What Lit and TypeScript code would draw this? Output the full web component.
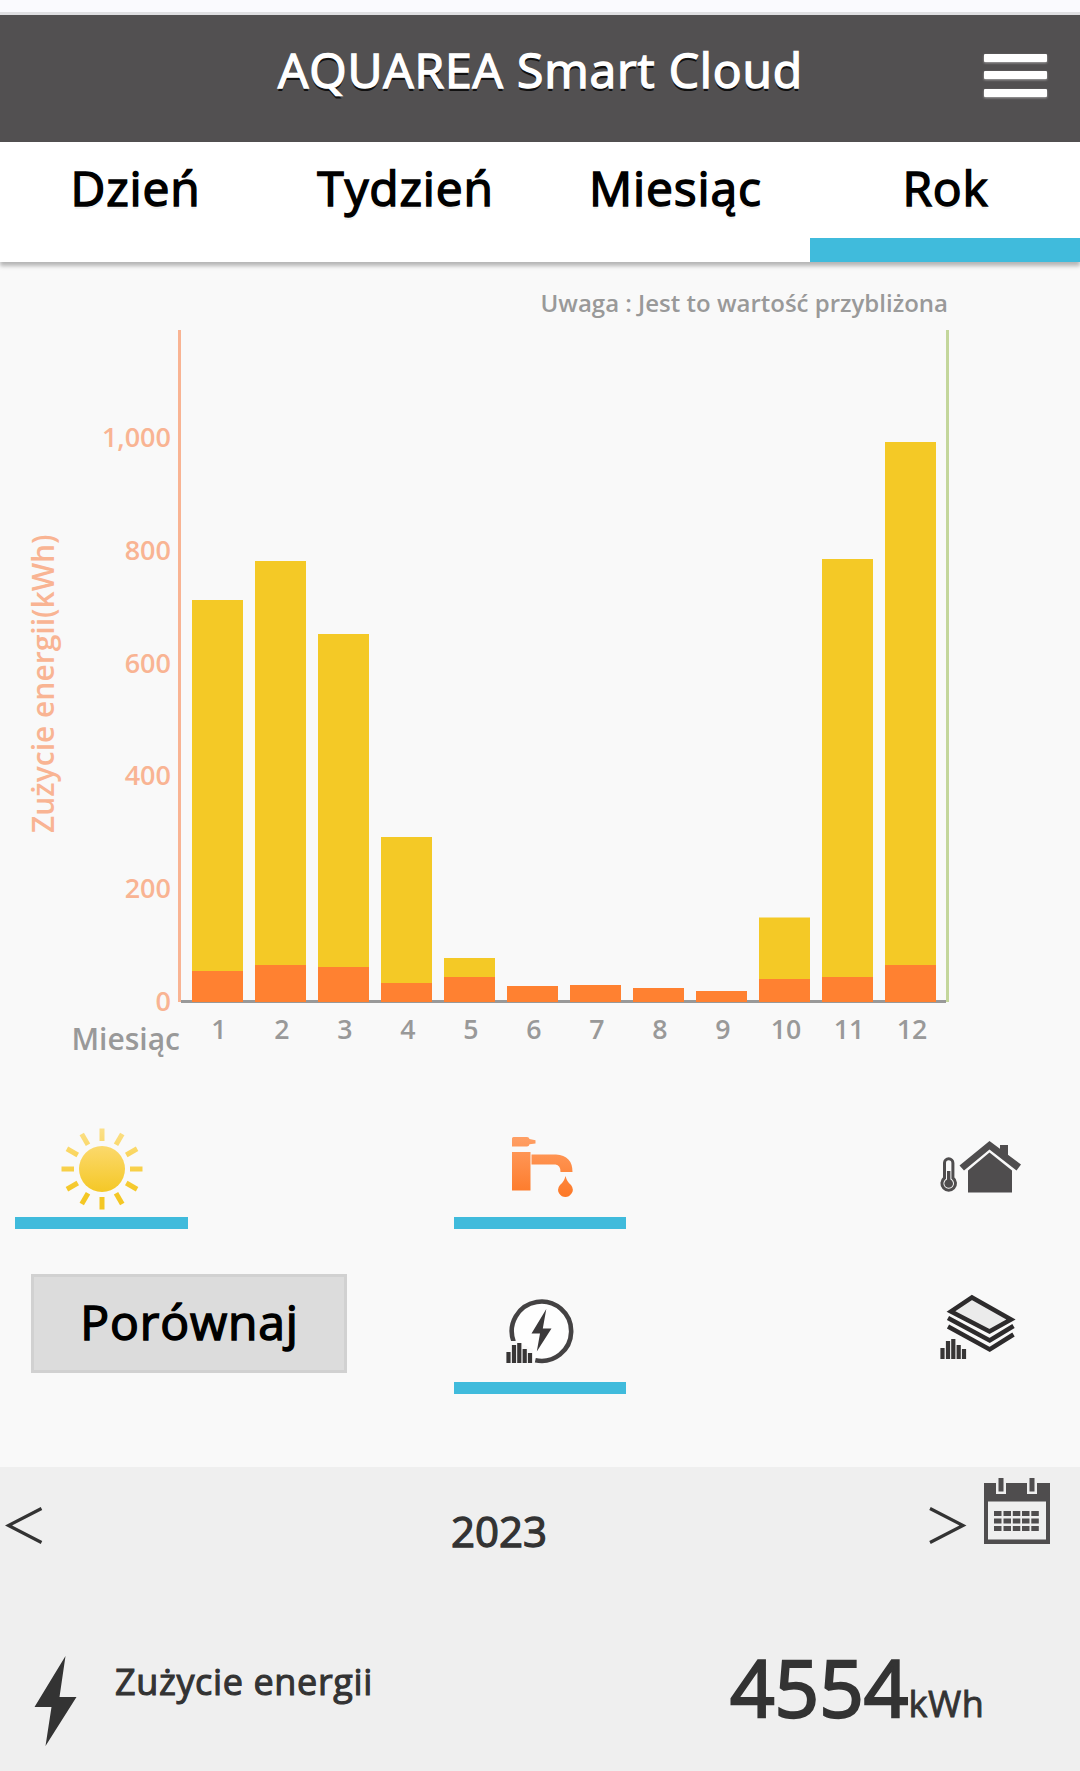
import { LitElement, html, css, svg } from "lit";

const BASE_Y = 1002;
const UNIT = 0.564;

interface Month { n: number; top: number; tank: number }
const MONTHS: Month[] = [
  { n: 1, top: 600, tank: 971 },
  { n: 2, top: 561, tank: 965 },
  { n: 3, top: 634, tank: 967 },
  { n: 4, top: 837, tank: 983 },
  { n: 5, top: 958, tank: 977 },
  { n: 6, top: 986, tank: 986 },
  { n: 7, top: 985, tank: 985 },
  { n: 8, top: 988, tank: 988 },
  { n: 9, top: 991, tank: 991 },
  { n: 10, top: 917.5, tank: 979 },
  { n: 11, top: 559, tank: 977 },
  { n: 12, top: 442, tank: 965 },
];
const TICKS: [string, number][] = [["1,000", 1000], ["800", 800], ["600", 600], ["400", 400], ["200", 200], ["0", 0]];

const sunIcon = html`<svg width="84" height="84" viewBox="-42 -42 84 84">
  <defs><linearGradient id="sun" gradientUnits="userSpaceOnUse" x1="0" y1="-41" x2="0" y2="41">
    <stop offset="0" stop-color="#fbe08a"></stop><stop offset=".35" stop-color="#fad55c"></stop><stop offset=".8" stop-color="#f4c724"></stop></linearGradient></defs>
  <circle r="23" fill="url(#sun)"></circle>
  <g fill="none" stroke="url(#sun)" stroke-width="5">
    ${Array.from({ length: 12 }, (_, i) => {
      const a = (i * Math.PI) / 6 + 0.0001, c = Math.cos(a), s = Math.sin(a);
      return svg`<path d="M${28 * c} ${28 * s}L${40.5 * c} ${40.5 * s}"></path>`;
    })}
  </g></svg>`;

const tapIcon = html`<svg width="64" height="64" viewBox="0 0 64 64">
  <defs><linearGradient id="tap" gradientUnits="userSpaceOnUse" x1="0" y1="0" x2="0" y2="62">
    <stop offset="0" stop-color="#ffa066"></stop><stop offset="1" stop-color="#fd7826"></stop></linearGradient></defs>
  <g fill="url(#tap)">
    <path d="M3 2.500Q3 1 4.500 1H18q2 0 2.500 2l6 1.300v3.200l-6 .8Q20 10.500 18 10.500H3z"></path>
    <path d="M3 16h18.500v38.500H3z"></path>
    <path d="M22.500 18.500H47Q63.500 19.500 63.500 36H51.500Q51.500 29 46.500 28.500H22.500z"></path>
    <path d="M56.500 40Q58 46 62 49Q65.500 53.500 62.500 57.500Q60 61 56.500 61Q52.500 61 50.200 57.500Q47.500 53 51 49Q55 46 56.500 40z"></path>
  </g></svg>`;

const houseIcon = html`<svg width="82" height="56" viewBox="0 0 82 56">
  <g fill="#4f4d4e">
    <path d="M50.500 1 82 24.500 77.500 30.500 50.500 9.500 25 30.500 20.500 25.500z"></path>
    <path d="M61 5h8v13l-8-6z"></path>
    <path d="M50.500 12.500 73 30.500v22H29V30.500z"></path>
  </g>
  <path d="M5.500 38V23a4.200 4.200 0 0 1 8.400 0V38A6.800 6.800 0 1 1 5.500 38z" fill="none" stroke="#4f4d4e" stroke-width="3"></path>
  <circle cx="9.700" cy="43.500" r="4.300" fill="#4f4d4e"></circle>
  <path d="M9.700 31v12" stroke="#4f4d4e" stroke-width="3.400"></path>
</svg>`;

const miniBars = svg`<path d="M2.500 65V54M8 65V47M13.300 65V45M18.700 65V51M24 65V55" fill="none" stroke="#383636" stroke-width="4.200"></path>`;

const energyIcon = html`<svg width="70" height="66" viewBox="0 0 70 66">
  <circle cx="36.300" cy="33.500" r="28.500" fill="#fefefe"></circle>
  <path d="M7.600 43.500A29.700 29.700 0 1 1 29.300 62.300" fill="none" stroke="#444243" stroke-width="4.600"></path>
  <path d="M0 43h9l18 8v15H0z" fill="#f9f9f9"></path>
  <path d="M40.300 11 36.800 30.500H45.500L30.800 53.500 34 35.500H25.500z" fill="#3b393a"></path>
  ${miniBars}
</svg>`;

const stackIcon = html`<svg width="76" height="66" viewBox="0 0 76 66">
  <path d="M32 3.500 71 25.500 49.500 37.500 11 17.500z" fill="#ebebeb" stroke="#2d2b2c" stroke-width="4.500"></path>
  <path d="M8 24 49.700 46.500 73.500 32M8 32.500 49.700 55.500 73.500 40.500" fill="none" stroke="#2d2b2c" stroke-width="4.500"></path>
  ${miniBars}
</svg>`;

const calendarIcon = html`<svg width="66" height="66" viewBox="0 0 66 66">
  <path fill-rule="evenodd" fill="#4f4d4e" d="M0 5H66V66H0zM4 23.500V61.500H62V23.500z"></path>
  <path d="M12 0h10v16H12zM43 0h10v16H43z" fill="#efefef"></path>
  <path d="M14.500 0h5v13.500h-5zM45.500 0h5v13.500h-5z" fill="#4f4d4e"></path>
  <g fill="#4f4d4e">${[33, 40.5, 48].map((y) => [10, 19.5, 28.8, 38, 47.3].map((x) => svg`<rect x=${x} y=${y} width="7.500" height="5"></rect>`))}</g>
</svg>`;

class AppRoot extends LitElement {
  static styles = css`
    :host { display: block; width: 1080px; height: 1771px; overflow: hidden; background: #f9f9f9;
      font-family: "Open Sans", sans-serif; font-weight: 600; color: #333; }
    * { box-sizing: border-box; }
    svg { display: block; }
    .medium { font-weight: 400; -webkit-text-stroke: 0.03em currentColor; letter-spacing: 0.0175em; }
    .digits { letter-spacing: 0; }
    .strip { height: 15px; background: #fafafe; border-bottom: 3px solid #dfdfe2; }
    .header { height: 127px; background: #525051; display: grid; grid-template-columns: 1fr auto 1fr; color: #fff; }
    .title { grid-column: 2; font-size: 48px; line-height: 66px; padding: 22px 0 0 1px; text-shadow: 0 3px 0 #111; white-space: nowrap; }
    .menu { justify-self: end; display: flex; flex-direction: column; gap: 9.500px; padding: 38.500px 33px 0 0; filter: drop-shadow(0 1px 1px #ffffff80); }
    .menu i { display: block; width: 63px; height: 8px; background: #fff; border-radius: 1px; }
    .tabs { height: 120px; background: #fff; display: grid; grid-template-columns: repeat(4, 1fr); box-shadow: 0 4px 4px rgba(0,0,0,.27); }
    .tab { font-size: 48px; line-height: 66px; padding: 13px 0 0 1px; text-align: center; color: #000; text-shadow: 0 3px 0 #f3f3f3; }
    .tab.on { border-bottom: 24px solid #40bbdc; }
    .chart { height: 838px; }
    .axis { fill: #999; font-size: 26.700px; }
    .tick { fill: #f9b493; font-size: 27px; text-anchor: end; }
    .name { font-size: 30px; }
    .note { font-size: 24px; }
    .vertical { text-anchor: start; }
    .controls { display: grid; grid-template-columns: 173px 172px 172px; justify-content: start; column-gap: 266px; padding: 24px 0 0 15px; height: 367px; grid-template-rows: 105px 60px 105px; }
    .cell { height: 105px; display: flex; flex-direction: column; justify-content: flex-end; align-items: center; border-bottom: 12px solid transparent; }
    .cell.on { border-color: #40bbdc; }
    .sun { padding: 0 0 6.500px 1px; }
    .tap { padding: 0 0 17px 2px; }
    .house { padding: 0 0 21px 4px; }
    .energy { padding: 0 0 18.500px 52px; align-items: flex-start; }
    .stack { padding: 0 0 22px 48px; align-items: flex-start; }
    .row2 { grid-row: 3; }
    .compare { grid-row: 3; width: 316px; height: 99px; margin: -15px 0 0 16px; padding: 0 0 4px 1px; background: #dcdcdc; border: 3px solid #d1d1d1;
      color: #000; font-family: "Open Sans", sans-serif; font-size: 48px; line-height: 66px; text-align: center; }
    .summary { height: 304px; background: #efefef; }
    .period { height: 150px; display: flex; align-items: flex-start; }
    .prev { padding: 38px 0 0 5px; width: 451px; }
    .year { font-size: 42px; line-height: 58px; padding-top: 35px; width: 478px; }
    .next { padding-top: 38px; width: 55px; }
    .cal { padding-top: 11px; }
    .usage { display: flex; align-items: flex-start; }
    .bolt { padding: 39px 0 0 34px; width: 115px; }
    .label { font-size: 36px; line-height: 50px; padding-top: 40px; width: 615px; }
    .total { font-size: 78px; line-height: 106px; padding-top: 17px; white-space: nowrap; }
    .unit { font-size: 36px; letter-spacing: 0.018em; -webkit-text-stroke-width: 0.024em; }
  `;

  render() {
    return html`
      <div class="strip"></div>
      <div class="header">
        <div class="title medium">AQUAREA Smart Cloud</div>
        <div class="menu"><i></i><i></i><i></i></div>
      </div>
      <div class="tabs">
        ${["Dzień", "Tydzień", "Miesiąc", "Rok"].map((t, i) => html`<div class="tab medium ${i === 3 ? "on" : ""}">${t}</div>`)}
      </div>
      <svg class="chart" width="1080" height="838" viewBox="0 262 1080 838">
        <text class="axis note" x="948" y="311.500" text-anchor="end">Uwaga : Jest to wartość przybliżona</text>
        <rect x="178" y="330" width="3" height="672" fill="#f9b493"></rect>
        <rect x="181" y="1000" width="765" height="3" fill="#999"></rect>
        <rect x="946" y="330" width="3" height="672" fill="#c3d69b"></rect>
        ${TICKS.map(([t, v]) => svg`<text class="tick" x="171" y=${BASE_Y + 9 - v * UNIT}>${t}</text>`)}
        <text class="tick name vertical" transform="translate(54 833) rotate(-90)">Zużycie energii(kWh)</text>
        ${MONTHS.map((m) => {
          const x = 192 + (m.n - 1) * 63;
          return svg`
            <rect x=${x} y=${m.top} width="51" height=${m.tank - m.top} fill="#f4c926"></rect>
            <rect x=${x} y=${m.tank} width="51" height=${BASE_Y - m.tank} fill="#ff8131"></rect>
            <text class="axis" x=${x + 27} y="1039" text-anchor="middle">${m.n}</text>`;
        })}
        <text class="axis name" x="180" y="1050" text-anchor="end">Miesiąc</text>
      </svg>
      <div class="controls">
        <div class="cell on sun">${sunIcon}</div>
        <div class="cell on tap">${tapIcon}</div>
        <div class="cell house">${houseIcon}</div>
        <button class="compare medium">Porównaj</button>
        <div class="cell on energy row2">${energyIcon}</div>
        <div class="cell stack row2">${stackIcon}</div>
      </div>
      <div class="summary">
        <div class="period">
          <div class="prev"><svg width="38" height="42" viewBox="0 0 38 42"><path d="M36.500 3.500 3.500 20.500 36.500 37.500" fill="none" stroke="#333" stroke-width="3.200"></path></svg></div>
          <div class="year medium digits">2023</div>
          <div class="next"><svg width="38" height="42" viewBox="0 0 38 42"><path d="M1 3.500 34 20.500 1 37.500" fill="none" stroke="#333" stroke-width="3.200"></path></svg></div>
          <div class="cal">${calendarIcon}</div>
        </div>
        <div class="usage">
          <div class="bolt"><svg width="44" height="90" viewBox="0 0 44 90"><path d="M31.500 0 25.500 41H42.500L11.500 90 17.500 51H0.500z" fill="#333"></path></svg></div>
          <div class="label medium">Zużycie energii</div>
          <div class="total medium digits">4554<span class="unit">kWh</span></div>
        </div>
      </div>`;
  }
}
customElements.define("app-root", AppRoot);
